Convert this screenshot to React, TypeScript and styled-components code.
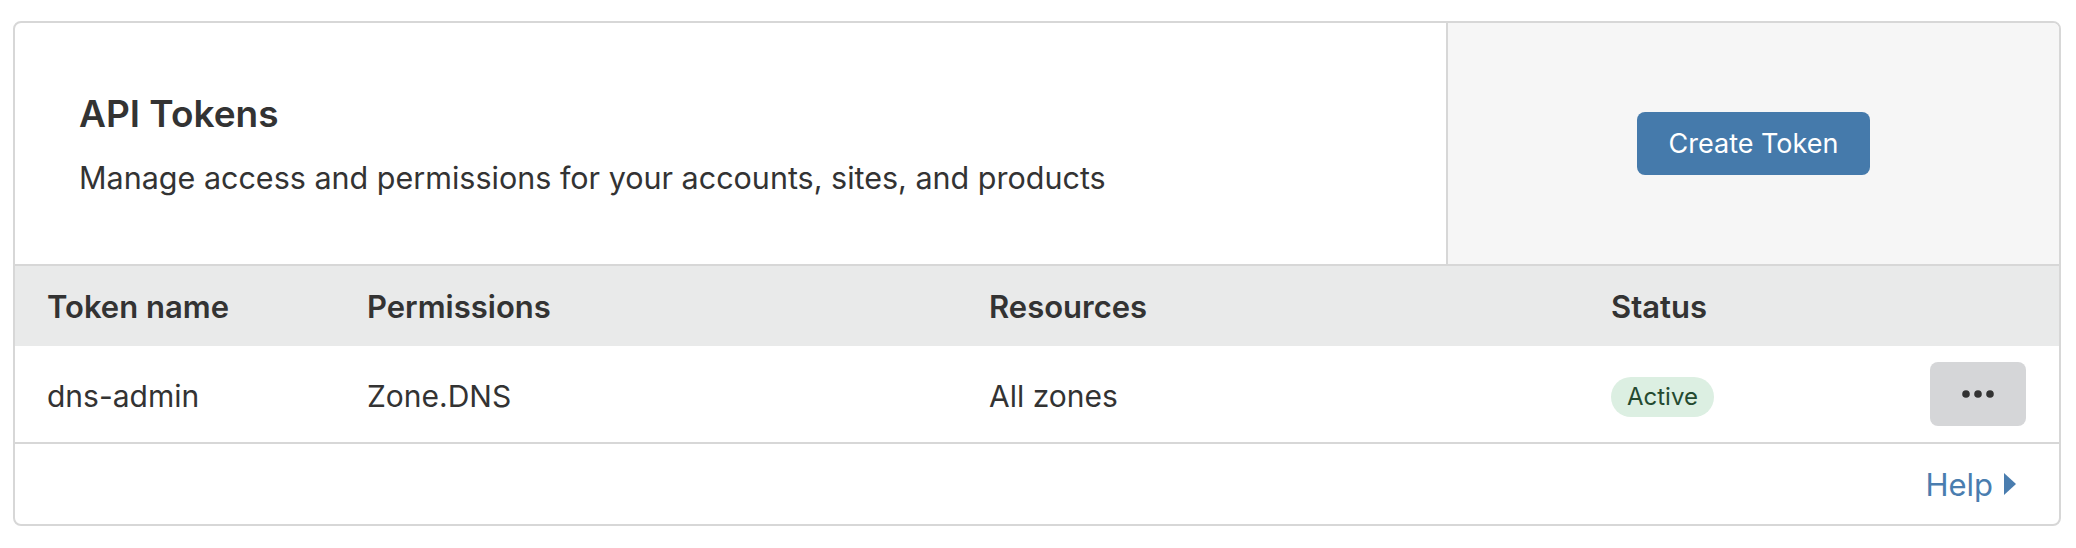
import { createGlobalStyle } from "styled-components";
import styled from "styled-components";

const GlobalStyle = createGlobalStyle`
    body {
        margin: 0;
        background: #fff;
        font-family: Inter, "Liberation Sans", Arial, sans-serif;
        color: #333;
    }
`;

const Page = styled.div`
    padding: 21px 0 0 13px;
`;

const Card = styled.section`
    width: 2048px;
    box-sizing: border-box;
    border: 2px solid #d7d7d7;
    border-radius: 8px;
    overflow: hidden;
    background: #fff;
`;

const Intro = styled.div`
    display: grid;
    grid-template-columns: 1431px 1fr;
    height: 241px;
    border-bottom: 2px solid #d7d7d7;
`;

const IntroText = styled.div`
    display: flex;
    flex-direction: column;
    justify-content: center;
    gap: 24px;
    padding-left: 64px;
`;

const Title = styled.h1`
    margin: 0;
    font-size: 37px;
    line-height: 44px;
    font-weight: 600;
    color: #333;
`;

const Description = styled.p`
    margin: 0;
    font-size: 30.5px;
    line-height: 36px;
    color: #333;
`;

const ActionPanel = styled.div`
    display: flex;
    align-items: center;
    justify-content: center;
    background: #f6f6f6;
    border-left: 2px solid #d7d7d7;
`;

const PrimaryButton = styled.button`
    width: 233px;
    height: 63px;
    border: 0;
    border-radius: 8px;
    background: #457aab;
    color: #fff;
    font-family: inherit;
    font-size: 27px;
    cursor: pointer;
`;

const Row = styled.div<{ $head?: boolean }>`
    display: grid;
    grid-template-columns: 320px 622px 622px 1fr auto;
    align-items: center;
    height: ${(p) => (p.$head ? "80px" : "96px")};
    background: ${(p) => (p.$head ? "#e9eaea" : "#fff")};
    border-bottom: ${(p) => (p.$head ? "0" : "2px solid #d7d7d7")};
`;

const Cell = styled.div<{ $head?: boolean }>`
    padding-left: 32px;
    font-size: ${(p) => (p.$head ? "31px" : "30px")};
    font-weight: ${(p) => (p.$head ? 600 : 400)};
    color: #333;
    padding-top: ${(p) => (p.$head ? "0" : "4px")};
`;

const Badge = styled.span`
    display: inline-block;
    padding: 0 16px;
    height: 40px;
    line-height: 40px;
    border-radius: 20px;
    background: #dcefe2;
    color: #244a30;
    font-size: 24px;
`;

const MoreCell = styled.div`
    padding-right: 33px;
`;

const MoreButton = styled.button`
    display: flex;
    align-items: center;
    justify-content: center;
    width: 96px;
    height: 64px;
    border: 0;
    border-radius: 8px;
    background: #d5d6d8;
    cursor: pointer;
`;

const Footer = styled.div`
    display: flex;
    align-items: center;
    justify-content: flex-end;
    height: 80px;
    padding-right: 43px;
`;

const HelpLink = styled.a`
    display: flex;
    align-items: center;
    gap: 11px;
    font-size: 31px;
    color: #4a7daf;
    text-decoration: none;
`;

const tokens = [
    { name: "dns-admin", permissions: "Zone.DNS", resources: "All zones", status: "Active" },
];

export default function App() {
    return (
        <>
            <GlobalStyle />
            <Page>
                <Card>
                    <Intro>
                        <IntroText>
                            <Title>API Tokens</Title>
                            <Description>Manage access and permissions for your accounts, sites, and products</Description>
                        </IntroText>
                        <ActionPanel>
                            <PrimaryButton>Create Token</PrimaryButton>
                        </ActionPanel>
                    </Intro>

                    <Row $head>
                        <Cell $head>Token name</Cell>
                        <Cell $head>Permissions</Cell>
                        <Cell $head>Resources</Cell>
                        <Cell $head>Status</Cell>
                        <div />
                    </Row>

                    {tokens.map((t) => (
                        <Row key={t.name}>
                            <Cell>{t.name}</Cell>
                            <Cell>{t.permissions}</Cell>
                            <Cell>{t.resources}</Cell>
                            <Cell>
                                <Badge>{t.status}</Badge>
                            </Cell>
                            <MoreCell>
                                <MoreButton aria-label="More">
                                    <svg width="34" height="10" viewBox="0 0 34 10">
                                        <circle cx="5" cy="5" r="3.8" fill="#333" />
                                        <circle cx="17" cy="5" r="3.8" fill="#333" />
                                        <circle cx="29" cy="5" r="3.8" fill="#333" />
                                    </svg>
                                </MoreButton>
                            </MoreCell>
                        </Row>
                    ))}

                    <Footer>
                        <HelpLink href="#">
                            Help
                            <svg width="12" height="22" viewBox="0 0 12 22">
                                <polygon points="0,0 12,11 0,22" fill="#4a7daf" />
                            </svg>
                        </HelpLink>
                    </Footer>
                </Card>
            </Page>
        </>
    );
}
